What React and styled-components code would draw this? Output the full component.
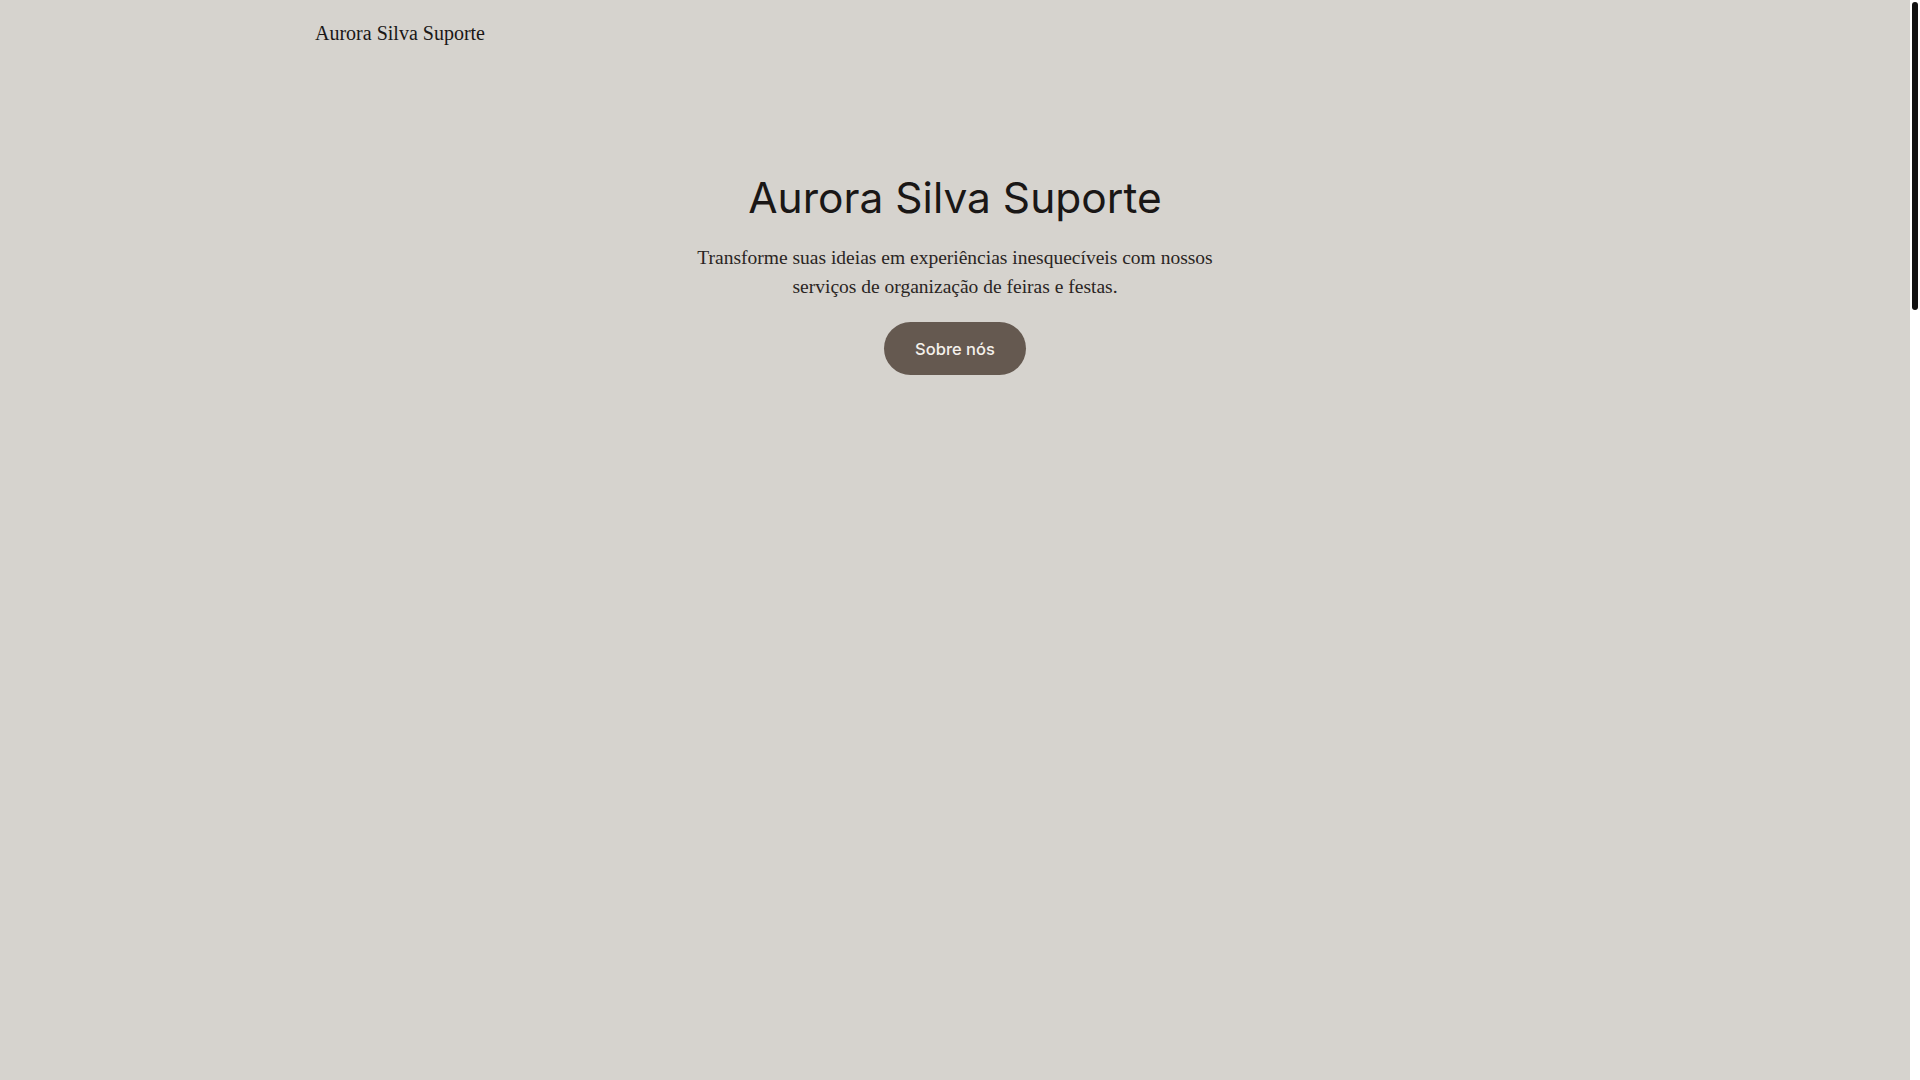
import React from "react";
import styled, { createGlobalStyle } from "styled-components";

const GlobalStyle = createGlobalStyle`
  html, body {
    margin: 0;
    padding: 0;
    height: 100%;
    overflow: hidden;
    background: #d6d3ce;
  }
  body {
    font-family: "Liberation Serif", "Times New Roman", serif;
    color: #1a1716;
  }
  ::-webkit-scrollbar {
    width: 10px;
  }
  ::-webkit-scrollbar-track {
    background: #ffffff;
  }
  ::-webkit-scrollbar-thumb {
    background: #111111;
    border: 2px solid #ffffff;
    border-radius: 4px;
  }
`;

const Viewport = styled.div`
  position: relative;
  height: 100vh;
  box-sizing: border-box;
  overflow-y: scroll;
  background: #d6d3ce;
  border-right: 10px solid #ffffff;
`;

const ScrollThumb = styled.div`
  position: fixed;
  top: 2px;
  right: 2px;
  width: 6px;
  height: 308px;
  border-radius: 3px;
  background: #111111;
  pointer-events: none;
`;

const Page = styled.div`
  min-height: 3790px;
  display: flex;
  flex-direction: column;
`;

const Header = styled.header`
  width: 100%;
  max-width: 1280px;
  margin: 0 auto;
  padding: 17px 0 16px;
  display: flex;
  align-items: center;
`;

const Brand = styled.a`
  font-family: "Liberation Serif", "Times New Roman", serif;
  font-size: 20px;
  line-height: 33px;
  color: #1a1716;
  text-decoration: none;
`;

const Hero = styled.section`
  display: flex;
  flex-direction: column;
  align-items: center;
  text-align: center;
  padding-top: 105px;
`;

const Title = styled.h1`
  margin: 0;
  font-family: Inter, "Noto Sans", sans-serif;
  font-weight: 400;
  font-size: 42.5px;
  line-height: 53px;
  color: #1a1716;
`;

const Lead = styled.p`
  margin: 19px 0 0;
  max-width: 560px;
  font-family: "Liberation Serif", "Times New Roman", serif;
  font-size: 19.5px;
  line-height: 29px;
  color: #2a2523;
`;

const Button = styled.a`
  margin-top: 21px;
  display: inline-flex;
  align-items: center;
  justify-content: center;
  width: 142px;
  height: 53px;
  border-radius: 999px;
  background: #655950;
  color: #f4f0eb;
  font-family: Inter, "Noto Sans", sans-serif;
  font-size: 16.5px;
  font-weight: 500;
  text-decoration: none;
`;

export default function App() {
  return (
    <>
      <GlobalStyle />
      <Viewport>
        <Page>
          <Header>
            <Brand href="#">Aurora Silva Suporte</Brand>
          </Header>
          <Hero>
            <Title>Aurora Silva Suporte</Title>
            <Lead>
              Transforme suas ideias em experiências inesquecíveis com nossos
              serviços de organização de feiras e festas.
            </Lead>
            <Button href="#">Sobre nós</Button>
          </Hero>
        </Page>
        <ScrollThumb />
      </Viewport>
    </>
  );
}
